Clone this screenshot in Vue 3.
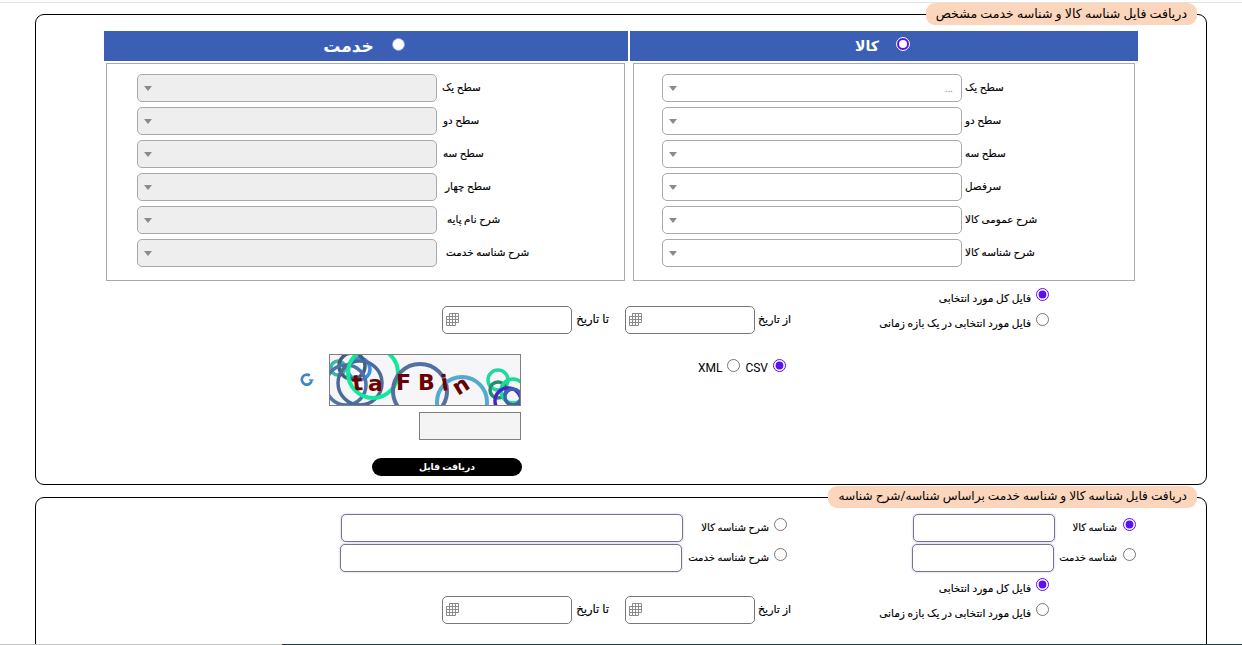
<script setup>
const goods = [
  { label: 'سطح یک', gap: 3, value: '...' },
  { label: 'سطح دو', gap: 3 },
  { label: 'سطح سه', gap: 3 },
  { label: 'سرفصل', gap: 3 },
  { label: 'شرح عمومی کالا', gap: 3 },
  { label: 'شرح شناسه کالا', gap: 3 }
]
const services = [
  { label: 'سطح یک', gap: 5 },
  { label: 'سطح دو', gap: 6 },
  { label: 'سطح سه', gap: 6 },
  { label: 'سطح چهار', gap: 8 },
  { label: 'شرح نام پایه', gap: 10 },
  { label: 'شرح شناسه خدمت', gap: 9 }
]
const rings = [
  { x: 8, y: 13, r: 7, c: '#3fb8a0', w: 3.5 },
  { x: 29, y: 14, r: 11, c: '#3a8fe0', w: 3.5 },
  { x: 22, y: 11, r: 13, c: '#3c5f80', w: 3.5 },
  { x: 16, y: 30, r: 20, c: '#4f72a8', w: 3.5 },
  { x: 30, y: 28, r: 22, c: '#4a6a9a', w: 3.5 },
  { x: 43, y: 18, r: 25, c: '#10e89a', w: 4 },
  { x: 90, y: 36, r: 27, c: '#54709e', w: 4 },
  { x: 132, y: 47, r: 25, c: '#55a8d0', w: 4 },
  { x: 168, y: 25, r: 10, c: '#20d8a0', w: 3.5 },
  { x: 168, y: 35, r: 8, c: '#2a8a70', w: 3.5 },
  { x: 183, y: 36, r: 12, c: '#10e090', w: 3.5 },
  { x: 178, y: 46, r: 13, c: '#4a20d0', w: 3.5 },
  { x: 183, y: 42, r: 8, c: '#4060b0', w: 3.5 }
]
const glyphs = [
  { t: 't', x: 23, y: 36, r: -6 },
  { t: 'a', x: 38, y: 36, r: 0 },
  { t: 'F', x: 66, y: 35, r: 0 },
  { t: 'B', x: 88, y: 35, r: 0 },
  { t: 'i', x: 112, y: 36, r: -8 },
  { t: 'n', x: 128, y: 41, r: -32 }
]
</script>

<template>
  <div class="page" dir="rtl">
    <div class="topline"></div>

    <fieldset class="box first-box">
      <legend class="pill">دریافت فایل شناسه کالا و شناسه خدمت مشخص</legend>

      <div class="columns">
        <section class="col goods">
          <header class="head">
            <span class="head-radio on"></span>
            <span class="head-title">کالا</span>
          </header>
          <div class="panel">
            <div v-for="row in goods" :key="row.label" class="row">
              <div class="select">
                <span class="arrow"></span>
                <span class="value">{{ row.value }}</span>
              </div>
              <span class="row-label" :style="{ marginLeft: row.gap + 'px' }">{{ row.label }}</span>
            </div>
          </div>
        </section>
        <section class="col services">
          <header class="head">
            <span class="head-radio"></span>
            <span class="head-title">خدمت</span>
          </header>
          <div class="panel">
            <div v-for="row in services" :key="row.label" class="row">
              <div class="select off">
                <span class="arrow"></span>
              </div>
              <span class="row-label" :style="{ marginLeft: row.gap + 'px' }">{{ row.label }}</span>
            </div>
          </div>
        </section>
      </div>

      <div class="scope">
        <div class="options">
          <label class="opt"><input type="radio" name="scope1" checked /><span>فایل کل مورد انتخابی</span></label>
          <label class="opt"><input type="radio" name="scope1" /><span>فایل مورد انتخابی در یک بازه زمانی</span></label>
        </div>
        <div class="dates">
          <span class="date-label">از تاریخ</span>
          <div class="date"><svg class="cal" viewBox="0 0 13 13"><path d="M3.5.5H12.5V9.5H9.5V12.5H.5V3.5H3.5ZM.5 3.5H12.5M.5 6.5H12.5M.5 9.5H9.5M3.5.5V12.5M6.5.5V12.5M9.5.5V9.5" /></svg></div>
          <span class="date-label second">تا تاریخ</span>
          <div class="date"><svg class="cal" viewBox="0 0 13 13"><path d="M3.5.5H12.5V9.5H9.5V12.5H.5V3.5H3.5ZM.5 3.5H12.5M.5 6.5H12.5M.5 9.5H9.5M3.5.5V12.5M6.5.5V12.5M9.5.5V9.5" /></svg></div>
        </div>
      </div>

      <div class="submit-area">
        <div class="formats">
          <label class="fmt"><input type="radio" name="fmt" checked /><span>CSV</span></label>
          <label class="fmt"><input type="radio" name="fmt" /><span>XML</span></label>
        </div>
        <div class="captcha-block">
          <div class="captcha-row">
            <svg class="captcha" viewBox="0 0 190 50">
              <rect width="190" height="50" fill="#f6f6f8" />
              <circle v-for="(c, i) in rings" :key="i" :cx="c.x" :cy="c.y" :r="c.r" fill="none" :stroke="c.c" :stroke-width="c.w" />
              <text
                v-for="g in glyphs"
                :key="g.t"
                class="captcha-char"
                :transform="`translate(${g.x} ${g.y}) rotate(${g.r})`"
              >{{ g.t }}</text>
            </svg>
            <svg class="reload" viewBox="0 0 14 14">
              <path d="M11.6 8.2A5 5 0 1 1 9.8 2.6" fill="none" stroke="#3a86c8" stroke-width="2.6" />
              <path d="M8.4 7.2H14L11.2 10.8Z" fill="#4a90d0" transform="translate(0 -1)" />
            </svg>
          </div>
          <input class="captcha-input" type="text" />
          <button class="download" type="button">دریافت فایل</button>
        </div>
      </div>
    </fieldset>

    <fieldset class="box second-box">
      <legend class="pill">دریافت فایل شناسه کالا و شناسه خدمت براساس شناسه/شرح شناسه</legend>

      <div class="lookup">
        <div class="lookup-row">
          <div class="id-cell">
            <label class="lk-label id"><input type="radio" name="lk" checked /><span>شناسه کالا</span></label>
            <input class="field short" type="text" />
          </div>
          <div class="desc-cell">
            <label class="lk-label desc"><input type="radio" name="lk" /><span>شرح شناسه کالا</span></label>
            <input class="field long" type="text" />
          </div>
        </div>
        <div class="lookup-row">
          <div class="id-cell">
            <label class="lk-label id wide"><input type="radio" name="lk" /><span>شناسه خدمت</span></label>
            <input class="field short" type="text" />
          </div>
          <div class="desc-cell">
            <label class="lk-label desc wide"><input type="radio" name="lk" /><span>شرح شناسه خدمت</span></label>
            <input class="field long" type="text" />
          </div>
        </div>
      </div>

      <div class="scope scope-two">
        <div class="options">
          <label class="opt"><input type="radio" name="scope2" checked /><span>فایل کل مورد انتخابی</span></label>
          <label class="opt"><input type="radio" name="scope2" /><span>فایل مورد انتخابی در یک بازه زمانی</span></label>
        </div>
        <div class="dates">
          <span class="date-label">از تاریخ</span>
          <div class="date"><svg class="cal" viewBox="0 0 13 13"><path d="M3.5.5H12.5V9.5H9.5V12.5H.5V3.5H3.5ZM.5 3.5H12.5M.5 6.5H12.5M.5 9.5H9.5M3.5.5V12.5M6.5.5V12.5M9.5.5V9.5" /></svg></div>
          <span class="date-label second">تا تاریخ</span>
          <div class="date"><svg class="cal" viewBox="0 0 13 13"><path d="M3.5.5H12.5V9.5H9.5V12.5H.5V3.5H3.5ZM.5 3.5H12.5M.5 6.5H12.5M.5 9.5H9.5M3.5.5V12.5M6.5.5V12.5M9.5.5V9.5" /></svg></div>
        </div>
      </div>
    </fieldset>

    <div class="bottom-strip"><span class="strip-a"></span><span class="strip-b"></span></div>
  </div>
</template>

<style>
html, body { margin: 0; background: #fff; overflow: hidden; height: 645px; }
</style>

<style scoped>
.page {
  position: relative;
  height: 645px;
  width: 1242px;
  overflow: hidden;
  background: #fff;
  font-family: Roboto, "DejaVu Sans", sans-serif;
  font-size: 10.4px;
  color: #000;
  -webkit-text-stroke: 0.15px #000;
}
.topline { height: 1px; margin-top: 2px; background: #e4e4e4; }
input[type="radio"] { width: 13px; height: 13px; margin: 0; accent-color: #5a0ff5; flex: none; }

.box {
  margin: 0 35px;
  padding: 0;
  min-width: 0;
  border: 1px solid #000;
  border-radius: 9px;
}
.first-box { height: 480px; box-sizing: content-box; }
.second-box { height: 300px; margin-top: 1px; }
.pill {
  box-sizing: border-box;
  height: 22px;
  line-height: 21px;
  margin-right: 9px;
  padding: 0 10px;
  background: #fbd5bc;
  border-radius: 9px;
  white-space: nowrap;
  -webkit-text-stroke: 0;
}
.first-box .pill { font-size: 12.6px; }
.second-box .pill { font-size: 12.15px; }

.columns { display: flex; justify-content: center; gap: 2px; margin-top: 6px; }
.col { display: flex; flex-direction: column; }
.goods { width: 508px; }
.services { width: 524px; }
.head {
  box-sizing: border-box;
  height: 30px;
  padding-right: 4px;
  background: #3b5fb5;
  color: #fff;
  display: flex;
  align-items: center;
  justify-content: center;
  gap: 18px;
  -webkit-text-stroke: 0;
}
.head-title { font-weight: 700; line-height: 30px; }
.goods .head-title { font-size: 14px; }
.services .head-title { font-size: 17px; }
.head-radio {
  box-sizing: border-box;
  width: 13px;
  height: 13px;
  border-radius: 50%;
  background: #fff;
  border: 1px solid #8aa0d8;
  margin-top: -4px;
}
.head-radio.on { width: 12px; height: 12px; border: 2.5px solid #5a0ff5; outline: 1px solid #fff; }

.panel {
  box-sizing: border-box;
  height: 218px;
  margin-top: 2px;
  padding-top: 10px;
  border: 1px solid #a9a9a9;
  display: flex;
  flex-direction: column;
  gap: 5px;
}
.goods .panel { margin-left: 3px; margin-right: 3px; }
.services .panel { margin-left: 2px; margin-right: 3px; }
.row { display: flex; direction: ltr; align-items: center; height: 28px; }
.goods .row { padding-left: 28px; }
.services .row { padding-left: 30px; }
.select {
  box-sizing: border-box;
  width: 300px;
  height: 28px;
  border: 1px solid #a9a9a9;
  border-radius: 5px;
  background: #fff;
  display: flex;
  align-items: center;
  justify-content: space-between;
  padding: 0 8px 0 6px;
  flex: none;
}
.select.off { background: #eeeeee; }
.arrow {
  width: 0;
  height: 0;
  border-left: 4px solid transparent;
  border-right: 4px solid transparent;
  border-top: 5px solid #8a8a8a;
}
.value { color: #888; font-size: 10px; -webkit-text-stroke: 0; }
.row-label { direction: rtl; white-space: nowrap; padding-bottom: 2px; }

.scope { display: flex; margin-top: 7px; height: 46px; }
.options {
  box-sizing: border-box;
  width: 415px;
  padding-right: 157px;
  display: flex;
  flex-direction: column;
  gap: 12px;
}
.opt { display: flex; gap: 5px; height: 13px; white-space: nowrap; }
.opt span { margin-top: 4px; line-height: 13px; font-size: 10.6px; }
.lk-label span { margin-top: 3px; line-height: 13px; font-size: 10.1px; }
.dates { display: flex; align-items: center; margin-top: 18px; height: 28px; }
.date-label { width: 36px; white-space: nowrap; font-size: 11px; padding-bottom: 2px; }
.date-label.second { width: 37px; margin-right: 16px; font-size: 11.6px; }
.date {
  box-sizing: border-box;
  width: 130px;
  height: 28px;
  border: 1px solid #777;
  border-radius: 5px;
  background: #fff;
  display: flex;
  align-items: center;
  justify-content: flex-end;
  padding-left: 3px;
}
.cal { width: 13px; height: 13px; margin-top: -1px; }
.cal path { fill: none; stroke: #8a8a8a; stroke-width: 1; }

.submit-area { display: flex; margin-top: 20px; }
.formats {
  display: flex;
  gap: 5px;
  width: 87px;
  margin-right: 420px;
  margin-left: 178px;
  padding-top: 5px;
  height: 20px;
}
.fmt { display: flex; gap: 5px; font-family: Roboto, sans-serif; font-size: 12px; -webkit-text-stroke: 0; }
.fmt span { margin-top: 2px; line-height: 14px; }
.captcha-block { display: flex; flex-direction: column; align-items: flex-start; }
.captcha-row { display: flex; align-items: center; gap: 15px; }
.captcha {
  box-sizing: border-box;
  width: 192px;
  height: 52px;
  border: 1px solid #808080;
  display: block;
  direction: ltr;
}
.captcha-char {
  font-family: "DejaVu Sans", sans-serif;
  font-weight: 700;
  font-size: 22px;
  fill: #6b0000;
  stroke: none;
  -webkit-text-stroke: 0;
}
.reload { width: 14px; height: 14px; margin-top: -1px; }
.captcha-input {
  box-sizing: border-box;
  width: 102px;
  height: 28px;
  margin: 6px 0 0;
  background: #f4f4f4;
  border: 1px solid #808080;
  border-radius: 0;
}
.download {
  width: 150px;
  height: 18px;
  margin: 18px -1px 0 0;
  padding: 0;
  border: 0;
  border-radius: 9px;
  background: #000;
  color: #fff;
  font-family: inherit;
  font-size: 9.2px;
  font-weight: 700;
  line-height: 18px;
  -webkit-text-stroke: 0;
}

.lookup { display: flex; flex-direction: column; gap: 2px; padding: 6px 70px 0 0; }
.lookup-row { display: flex; }
.id-cell { display: flex; width: 349px; }
.desc-cell { display: flex; }
.lk-label { display: flex; gap: 6px; padding-top: 4px; white-space: nowrap; box-sizing: border-box; }
.lk-label.desc { gap: 5px; }
.lk-label.id { width: 81px; }
.lk-label.id.wide { width: 82px; }
.lk-label.desc { width: 104px; }
.lk-label.desc.wide { width: 105px; }
.field {
  box-sizing: border-box;
  height: 28px;
  margin: 0;
  border: 1px solid #77748a;
  border-radius: 5px;
  background: #fff;
  box-shadow: 0 0 2px #b9a6ee;
}
.field.short { width: 142px; }
.field.long { width: 342px; }
.scope-two { margin-top: 6px; }

.bottom-strip { position: absolute; left: 0; right: 0; bottom: 0; height: 1px; display: flex; direction: ltr; }
.strip-a { width: 282px; background: #c4c4c4; }
.strip-b { flex: 1; background: #1f3a40; }
</style>
